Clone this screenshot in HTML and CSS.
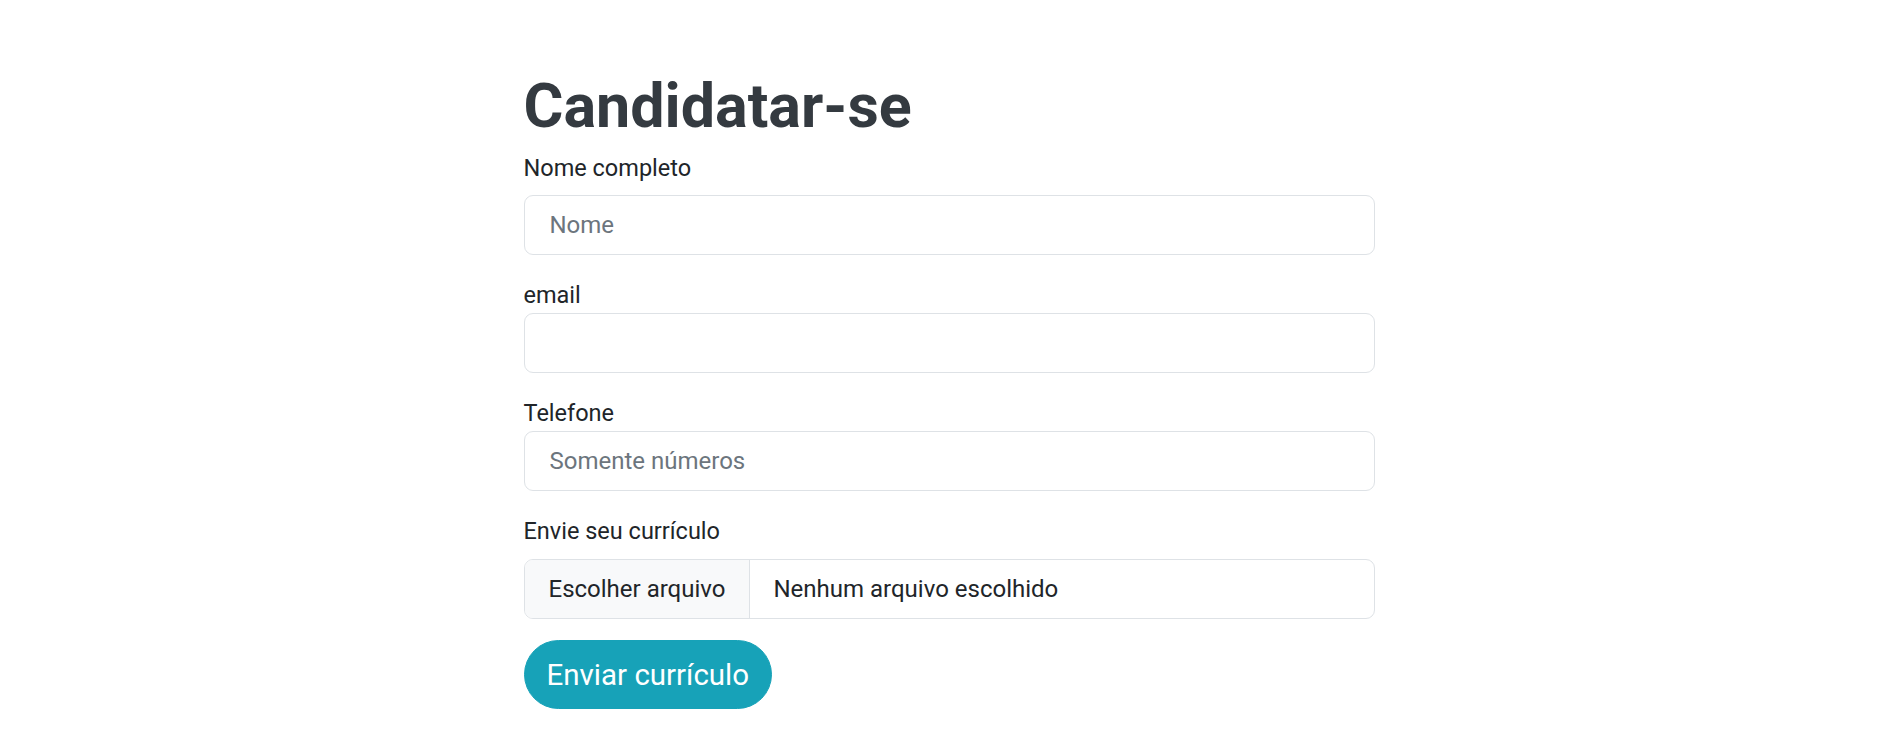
FILE: index.html
```html
<!DOCTYPE html>
<html lang="pt-BR">
<head>
<meta charset="utf-8">
<title>Candidatar-se</title>
<link rel="stylesheet" href="styles.css">
</head>
<body>
<main class="container">
  <h1 class="title">Candidatar-se</h1>
  <form class="form">
    <div class="group group-first">
      <label class="label" for="nome">Nome completo</label>
      <input class="control" id="nome" type="text" placeholder="Nome">
    </div>
    <div class="group">
      <label class="label" for="email">email</label>
      <input class="control" id="email" type="email">
    </div>
    <div class="group">
      <label class="label" for="tel">Telefone</label>
      <input class="control" id="tel" type="text" placeholder="Somente números">
    </div>
    <div class="group group-file">
      <label class="label" for="cv">Envie seu currículo</label>
      <div class="file" id="cv">
        <span class="file-btn">Escolher arquivo</span>
        <span class="file-name">Nenhum arquivo escolhido</span>
      </div>
    </div>
    <button class="submit" type="button">Enviar currículo</button>
  </form>
</main>
</body>
</html>
```

FILE: styles.css
```css
* { box-sizing: border-box; }
body {
  margin: 0;
  background: #ffffff;
  font-family: Roboto, "Liberation Sans", sans-serif;
  color: #212529;
}
.container {
  width: 851px;
  margin: 0 auto;
  padding-top: 69px;
}
.title {
  margin: 0 0 10px;
  font-size: 61px;
  line-height: 74px;
  font-weight: 700;
  color: #343a40;
}
.form {
  display: flex;
  flex-direction: column;
}
.group {
  display: flex;
  flex-direction: column;
  margin-bottom: 25px;
}
.label {
  font-size: 23.5px;
  line-height: 30px;
  margin-bottom: 3px;
  color: #212529;
}
.group-first .label { margin-bottom: 12px; }
.group-file .label { margin-bottom: 13px; }
.group-file { margin-bottom: 21px; }
.control {
  height: 60px;
  width: 100%;
  padding: 0 25px;
  font-family: inherit;
  font-size: 24px;
  color: #212529;
  background: #fff;
  border: 1px solid #dee2e6;
  border-radius: 9px;
  outline: none;
}
.control::placeholder { color: #6c757d; }
.file {
  display: flex;
  height: 60px;
  border: 1px solid #dee2e6;
  border-radius: 9px;
  overflow: hidden;
  font-size: 24px;
}
.file-btn {
  display: flex;
  align-items: center;
  flex: 0 0 222px;
  padding: 0 24px;
  white-space: nowrap;
  background: #f8f9fa;
  border-right: 1px solid #dee2e6;
  color: #212529;
}
.file-name {
  display: flex;
  align-items: center;
  padding: 0 23px;
  white-space: nowrap;
  color: #212529;
}
.submit {
  align-self: flex-start;
  height: 69px;
  padding: 0 22px;
  font-family: inherit;
  font-size: 29.5px;
  color: #fff;
  background: #17a2b8;
  border: 1px solid #17a2b8;
  border-radius: 35px;
  cursor: pointer;
}
```
